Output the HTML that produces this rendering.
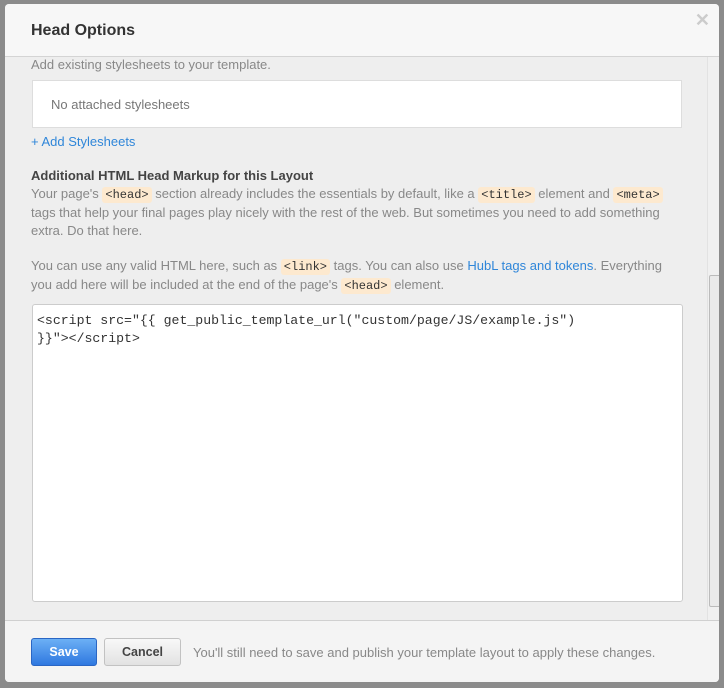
<!DOCTYPE html>
<html><head><style>
body{margin:0;width:724px;height:688px;background:#8b8b8b;position:relative;overflow:hidden;font-family:"Liberation Sans",Arial,sans-serif;}
.modal{position:absolute;left:5px;top:4px;width:714px;height:678px;background:#eee;border-radius:4px;overflow:hidden;}
.hd{position:absolute;left:0;top:0;width:714px;height:52px;background:#f7f7f7;border-bottom:1px solid #d4d4d4;}
.hd h1{margin:0;position:absolute;left:26px;top:18px;font-size:16px;font-weight:bold;color:#333;}
.x{position:absolute;right:9px;top:6px;font-size:18px;color:#ccc;font-weight:bold;}
.t{position:absolute;font-size:13px;color:#888;line-height:18px;}
.box{position:absolute;left:27px;top:76px;width:648px;height:46px;background:#fff;border:1px solid #ddd;}
.box span{position:absolute;left:18px;top:16px;font-size:13px;color:#777;}
a{color:#2f86d9;text-decoration:none}
code{font-family:"Liberation Mono",monospace;font-size:12px;color:#333;background:#fde9cf;padding:1px 3px;border-radius:3px;}
.ta{position:absolute;left:27px;top:300px;width:649px;height:296px;background:#fff;border:1px solid #ccc;border-radius:3px;}
.ta pre{margin:7px 0 0 4px;font-family:"Liberation Mono",monospace;font-size:13.2px;line-height:18px;color:#333;}
.sb{position:absolute;left:702px;top:53px;width:12px;height:563px;background:#f0f0f0;border-left:1px solid #e2e2e2;}
.th{position:absolute;left:1px;top:218px;width:10px;height:330px;background:#eaeaea;border:1px solid #bbb;border-radius:2px;}
.ft{position:absolute;left:0;top:616px;width:714px;height:62px;background:#f4f4f4;border-top:1px solid #d0d0d0;}
.btn{position:absolute;top:17px;height:26px;border-radius:3px;font-size:12.5px;font-weight:bold;text-align:center;line-height:26px;}
</style></head><body>
<div class="modal">
<div class="hd"><h1>Head Options</h1><div class="x">✕</div></div>
<div class="t" style="left:26px;top:52px">Add existing stylesheets to your template.</div>
<div class="box"><span>No attached stylesheets</span></div>
<div class="t" style="left:26px;top:129px"><a>+ Add Stylesheets</a></div>
<div class="t" style="left:26px;top:163px;color:#444;font-weight:bold">Additional HTML Head Markup for this Layout</div>
<div class="t" style="left:26px;top:181px;width:650px">Your page's <code>&lt;head&gt;</code> section already includes the essentials by default, like a <code>&lt;title&gt;</code> element and <code>&lt;meta&gt;</code> tags that help your final pages play nicely with the rest of the web. But sometimes you need to add something extra. Do that here.</div>
<div class="t" style="left:26px;top:253px;width:650px">You can use any valid HTML here, such as <code>&lt;link&gt;</code> tags. You can also use <a>HubL tags and tokens</a>. Everything you add here will be included at the end of the page's <code>&lt;head&gt;</code> element.</div>
<div class="ta"><pre>&lt;script src="{{ get_public_template_url("custom/page/JS/example.js")
}}"&gt;&lt;/script&gt;</pre></div>
<div class="sb"><div class="th"></div></div>
<div class="ft">
<div class="btn" style="left:26px;width:64px;background:linear-gradient(#6cb0f5,#2f78e0);border:1px solid #2a66c4;color:#fff">Save</div>
<div class="btn" style="left:99px;width:75px;background:linear-gradient(#f8f8f8,#e2e2e2);border:1px solid #c2c2c2;color:#444">Cancel</div>
<div class="t" style="left:188px;top:23px">You'll still need to save and publish your template layout to apply these changes.</div>
</div>
</div>
</body></html>
